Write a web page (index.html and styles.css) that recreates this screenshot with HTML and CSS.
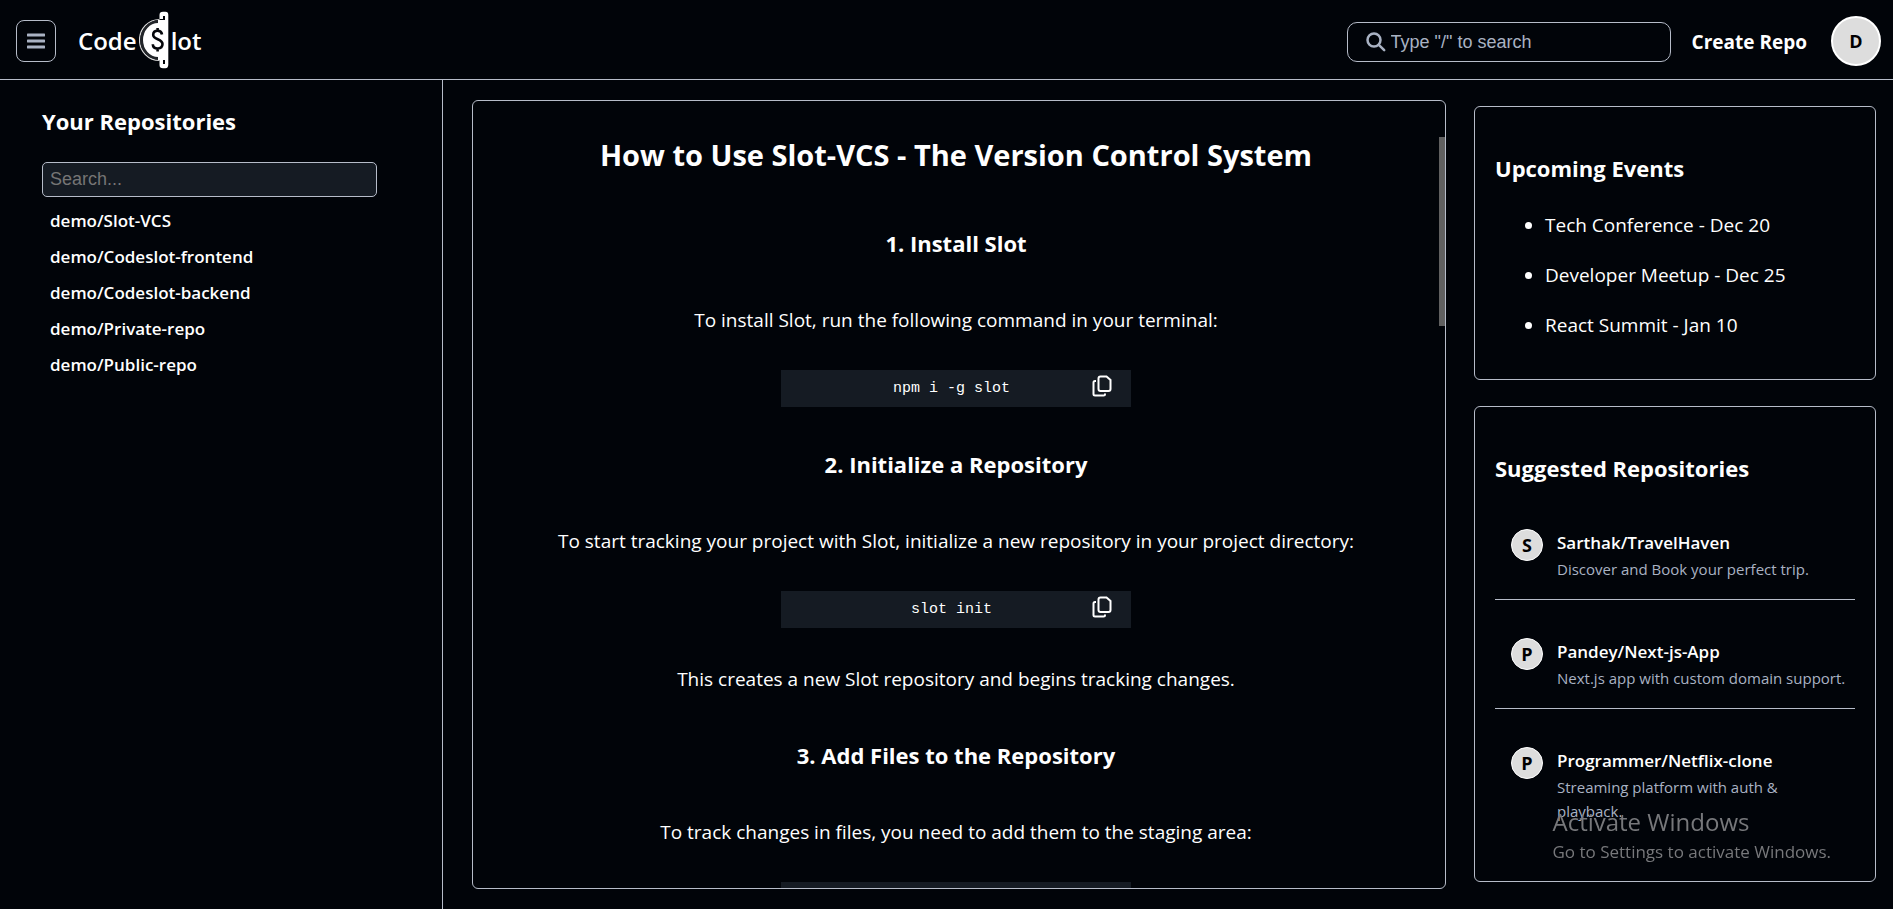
FILE: index.html
```html
<!DOCTYPE html>
<html lang="en">
<head>
<meta charset="utf-8">
<title>CodeSlot</title>
<meta name="viewport" content="width=device-width, initial-scale=1">
<link rel="stylesheet" href="styles.css">
</head>
<body>
<svg class="sprite" aria-hidden="true">
  <symbol id="copy" viewBox="0 0 20 22">
    <path d="M8.500 1.500h6L18.500 5v9a2 2 0 0 1-2 2h-8a2 2 0 0 1-2-2v-10.500a2 2 0 0 1 2-2z"/>
    <path d="M4 6H3a1.500 1.500 0 0 0-1.500 1.500v11.500a1.500 1.500 0 0 0 1.500 1.500h8.500a1.500 1.500 0 0 0 1.500-1.500v-.5"/>
  </symbol>
</svg>

<header class="topbar">
  <button class="menu" type="button" aria-label="Menu">
    <svg width="18" height="16" viewBox="0 0 18 16" aria-hidden="true"><path d="M1 2h16M1 8h16M1 14h16"/></svg>
  </button>
  <a class="logo" href="#">
    <span>Code</span>
    <svg class="logo-mark" width="30" height="60" viewBox="0 0 30 60" aria-label="S">
      <path d="M20.500 8.500A20 20.500 0 0 0 20.500 49.500" fill="#05070b" stroke="#d8d8d8" stroke-width="1.200"/>
      <path d="M20 10.500A17.500 18.500 0 0 0 20 47.500" fill="none" stroke="#222529" stroke-width="2.500"/>
      <path d="M19 12V9H27V49H19V46A15 17 0 0 1 19 12z" fill="#fff"/>
      <path d="M20.500 8V4Q20.500 .8 24 .8h2.500Q29.300 .8 29.300 4v49.500q0 3.700-2.800 3.700H24q-3.500 0-3.500-3.200v-5H24v4h2V5h-2v3z" fill="#fff"/>
      <path d="M23 23.500c-.3-2.400-2-3.700-4.300-3.700-2.700 0-4.500 1.500-4.500 3.900 0 5.400 9.300 3.700 9.300 9.400 0 2.800-2 4.400-4.800 4.400-2.900 0-4.800-1.600-4.900-4.300M18.600 17v3.500M18.600 37v3.500" fill="none" stroke="#05070b" stroke-width="2.600"/>
    </svg>
    <span>lot</span>
  </a>
  <label class="search">
    <svg width="20" height="20" viewBox="0 0 20 20" aria-hidden="true"><circle cx="8" cy="8" r="6.500"/><path d="M12.800 12.800l5.400 5.400"/></svg>
    <input type="text" placeholder="Type &quot;/&quot; to search" aria-label="Search">
  </label>
  <a class="create" href="#">Create Repo</a>
  <button class="avatar avatar-lg" type="button" aria-label="Profile">D</button>
</header>

<div class="layout">
  <aside class="sidebar">
    <h3>Your Repositories</h3>
    <input class="filter" type="text" placeholder="Search..." aria-label="Search your repositories">
    <ul class="repos">
      <li><a href="#">demo/Slot-VCS</a></li>
      <li><a href="#">demo/Codeslot-frontend</a></li>
      <li><a href="#">demo/Codeslot-backend</a></li>
      <li><a href="#">demo/Private-repo</a></li>
      <li><a href="#">demo/Public-repo</a></li>
    </ul>
  </aside>

  <main class="guide">
    <div class="guide-body">
      <h1>How to Use Slot-VCS - The Version Control System</h1>
      <h3>1. Install Slot</h3>
      <p>To install Slot, run the following command in your terminal:</p>
      <div class="code"><code>npm i -g slot</code><button type="button" aria-label="Copy"><svg><use href="#copy"/></svg></button></div>
      <h3>2. Initialize a Repository</h3>
      <p>To start tracking your project with Slot, initialize a new repository in your project directory:</p>
      <div class="code"><code>slot init</code><button type="button" aria-label="Copy"><svg><use href="#copy"/></svg></button></div>
      <p>This creates a new Slot repository and begins tracking changes.</p>
      <h3>3. Add Files to the Repository</h3>
      <p>To track changes in files, you need to add them to the staging area:</p>
      <div class="code"></div>
    </div>
    <div class="thumb"></div>
  </main>

  <aside class="rail">
    <section class="card">
      <h3>Upcoming Events</h3>
      <ul class="events">
        <li>Tech Conference - Dec 20</li>
        <li>Developer Meetup - Dec 25</li>
        <li>React Summit - Jan 10</li>
      </ul>
    </section>
    <section class="card card-grow">
      <h3>Suggested Repositories</h3>
      <ul class="suggested">
        <li><span class="avatar">S</span><div><a href="#">Sarthak/TravelHaven</a><p>Discover and Book your perfect trip.</p></div></li>
        <li><span class="avatar">P</span><div><a href="#">Pandey/Next-js-App</a><p>Next.js app with custom domain support.</p></div></li>
        <li><span class="avatar">P</span><div><a href="#">Programmer/Netflix-clone</a><p>Streaming platform with auth &amp;<br>playback.</p></div></li>
      </ul>
    </section>
  </aside>
</div>

<div class="watermark">
  <div class="watermark-title">Activate Windows</div>
  <div>Go to Settings to activate Windows.</div>
</div>
</body>
</html>
```

FILE: styles.css
```css
:root {
  --bg: #010409;
  --panel: #151b23;
  --line: #b6bcc9;
  --muted: #a9b2c3;
  --sans: "Open Sans", "Noto Sans", sans-serif;
  --arial: "Liberation Sans", Arial, sans-serif;
}

* { box-sizing: border-box; }

body {
  margin: 0;
  height: 100vh;
  display: flex;
  flex-direction: column;
  overflow: hidden;
  background: var(--bg);
  color: #fff;
  font: 19px/30px var(--sans);
}

.sprite { display: none; }
a { color: inherit; text-decoration: none; }
button { padding: 0; border: 0; background: none; color: inherit; font: inherit; cursor: pointer; }
h1, h3, p, ul { margin: 0; padding: 0; }
ul { list-style: none; }
h3 { padding-bottom: 2px; font-size: 22px; line-height: 28px; font-weight: 700; }

/* Top bar */
.topbar {
  display: flex;
  align-items: center;
  height: 80px;
  padding: 2px 12px 0 16px;
  border-bottom: 1px solid var(--line);
}
.menu {
  display: flex;
  align-items: center;
  justify-content: center;
  width: 40px;
  height: 42px;
  border: 1px solid var(--line);
  border-radius: 8px;
}
.menu svg { fill: none; stroke: var(--muted); stroke-width: 3; stroke-linecap: round; }
.logo {
  display: flex;
  align-items: center;
  gap: 2px;
  margin: 0 auto 0 22px;
  font-size: 24px;
  font-weight: 600;
}
.search {
  display: flex;
  align-items: center;
  gap: 5px;
  width: 324px;
  height: 40px;
  margin-top: 3px;
  padding: 0 18px;
  border: 1px solid var(--line);
  border-radius: 10px;
}
.search svg { flex: none; fill: none; stroke: var(--muted); stroke-width: 2.5; stroke-linecap: round; }
.search input {
  flex: 1;
  min-width: 0;
  padding: 0;
  border: 0;
  background: none;
  color: #fff;
  font: 18px var(--arial);
}
.search input::placeholder { color: var(--muted); opacity: 1; }
.create { margin: 3px 24px 0 21px; font-weight: 700; }
.avatar {
  display: flex;
  flex: none;
  align-items: center;
  justify-content: center;
  width: 32px;
  height: 32px;
  border: 1px solid #fff;
  border-radius: 50%;
  background: #ddd;
  color: #000;
  font-size: 18px;
  font-weight: 700;
}
.avatar-lg { width: 50px; height: 50px; border-width: 2px; }

/* Page columns */
.layout { flex: 1; min-height: 0; display: flex; }

.sidebar { flex: none; width: 443px; padding: 27px 65px 0 42px; border-right: 1px solid var(--line); }
.filter {
  display: block;
  width: 100%;
  height: 35px;
  margin: 25px 0 6px;
  padding: 0 7px;
  border: 1px solid var(--line);
  border-radius: 5px;
  background: var(--panel);
  color: #fff;
  font: 18px var(--arial);
}
.filter::placeholder { color: #757575; opacity: 1; }
.repos li { padding: 3px 8px; font-size: 17px; font-weight: 600; }

.guide {
  position: relative;
  flex: 1;
  min-width: 0;
  margin: 20px 28px 20px 29px;
  padding: 34px 6px 0 0;
  border: 1px solid var(--line);
  border-radius: 6px;
  overflow: hidden;
  text-align: center;
}
.guide-body { height: 100%; overflow: hidden; }
.guide h1 { margin-bottom: 54px; font-size: 29px; line-height: 40px; }
.guide h3 { margin: 47px 0 46px; }
.guide .code + h3 { margin-top: 43px; }
.guide p { margin: 36px 0 35px; }
.code {
  position: relative;
  width: 350px;
  height: 37px;
  margin: 35px auto 36px;
  padding-right: 9px;
  background: var(--panel);
  font: 15px/38px "Liberation Mono", monospace;
}
.code code { font: inherit; }
.code button { position: absolute; top: 5px; right: 19px; height: 22px; line-height: 0; }
.code svg { width: 20px; height: 22px; fill: none; stroke: #fff; stroke-width: 2; }
.thumb { position: absolute; top: 36px; right: 0; width: 6px; height: 189px; background: #606060; }

.rail { flex: none; width: 419px; display: flex; flex-direction: column; gap: 26px; padding: 26px 17px 27px 0; }
.card { padding: 47px 20px 0; border: 1px solid var(--line); border-radius: 6px; }
.card-grow { flex: 1; }
.events { margin: 16px 0 29px; padding-left: 50px; list-style: disc; }
.events li { padding: 10px 0; }
.suggested { margin-top: 7px; }
.suggested li { display: flex; gap: 14px; min-height: 109px; padding: 38px 0 0 16px; border-bottom: 1px solid var(--line); }
.suggested li:last-child { border-bottom: 0; }
.suggested a { display: block; font-size: 17px; font-weight: 600; line-height: 28px; }
.suggested p { color: var(--muted); font-size: 15px; line-height: 24px; }

/* System notice over the lower right corner */
.watermark { position: fixed; right: 62px; bottom: 42px; color: #77787b; font-size: 17px; }
.watermark-title { font-size: 24px; }
```
